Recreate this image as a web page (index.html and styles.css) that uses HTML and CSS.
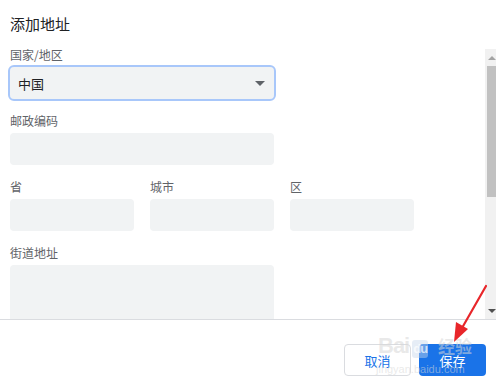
FILE: index.html
```html
<!DOCTYPE html>
<html lang="zh-CN">
<head>
    <meta charset="UTF-8">
    <meta name="viewport" content="width=device-width, initial-scale=1.0">
    <title>添加地址</title>
    <link rel="stylesheet" href="styles.css">
</head>
<body>
    <div class="dialog">
        <h1 class="title">添加地址</h1>
        <div class="body-row">
            <div class="form">
                <div class="field">
                    <div class="label">国家/地区</div>
                    <div class="select">
                        <span>中国</span>
                        <span class="caret"></span>
                    </div>
                </div>
                <div class="field">
                    <div class="label">邮政编码</div>
                    <div class="input wide"></div>
                </div>
                <div class="field-row">
                    <div class="field">
                        <div class="label">省</div>
                        <div class="input small"></div>
                    </div>
                    <div class="field">
                        <div class="label">城市</div>
                        <div class="input small"></div>
                    </div>
                    <div class="field">
                        <div class="label">区</div>
                        <div class="input small"></div>
                    </div>
                </div>
                <div class="field">
                    <div class="label">街道地址</div>
                    <div class="input wide textarea"></div>
                </div>
            </div>
            <!-- fake scrollbar -->
            <div class="scrollbar">
                <div class="sb-btn up"></div>
                <div class="sb-thumb"></div>
                <div class="sb-space"></div>
                <div class="sb-btn down"></div>
            </div>
        </div>
        <div class="footer">
            <button class="btn cancel">取消</button>
            <button class="btn save">保存</button>
        </div>

        <div class="watermark">
            <span class="wm-logo">Bai<b>du</b></span>
            <span class="wm-jy">经验</span>
            <span class="wm-url">jingyan.baidu.com</span>
        </div>

        <svg class="arrow" width="40" height="62" viewBox="0 0 40 62">
            <line x1="36" y1="2" x2="12" y2="44" stroke="#e8262a" stroke-width="2.2" stroke-linecap="round"/>
            <polygon points="4,58 6,38 18,45" fill="#e8262a"/>
        </svg>
    </div>
</body>
</html>
```

FILE: styles.css
```css
body {
    margin: 0;
    font-family: "Noto Sans CJK SC", "Noto Sans", sans-serif;
    background: #fff;
}
.dialog {
    position: relative;
    width: 496px;
    height: 388px;
    overflow: hidden;
}
.title {
    margin: 0;
    height: 47px;
    box-sizing: border-box;
    padding: 14px 0 0 10px;
    font-size: 15px;
    line-height: 20px;
    font-weight: normal;
    color: #202124;
}
.body-row {
    display: flex;
    height: 272px;
}
.form {
    flex: 1;
    overflow: hidden;
    padding-left: 10px;
}
.field {
    margin-bottom: 14px;
}
.field-row {
    display: flex;
    gap: 16px;
}
.label {
    font-size: 12px;
    line-height: 15px;
    color: #5f6368;
    margin-bottom: 5px;
}
.select {
    width: 264px;
    height: 32px;
    box-sizing: border-box;
    background: #f1f3f4;
    border-radius: 4px;
    outline: 2px solid #a8c7fa;
    display: flex;
    align-items: center;
    justify-content: space-between;
    padding: 0 9px 0 8px;
    font-size: 13px;
    color: #202124;
}
.caret {
    width: 0;
    height: 0;
    border-left: 5px solid transparent;
    border-right: 5px solid transparent;
    border-top: 5px solid #5f6368;
}
.input {
    height: 32px;
    background: #f1f3f4;
    border-radius: 4px;
}
.wide {
    width: 264px;
}
.small {
    width: 124px;
}
.textarea {
    height: 100px;
}
.scrollbar {
    width: 11px;
    margin-top: 2px;
    background: #f1f1f1;
    display: flex;
    flex-direction: column;
}
.sb-btn {
    height: 17px;
    position: relative;
}
.sb-btn::after {
    content: "";
    position: absolute;
    left: 3px;
    width: 0;
    height: 0;
    border-left: 4px solid transparent;
    border-right: 4px solid transparent;
}
.sb-btn.up::after {
    top: 7px;
    border-bottom: 4px solid #a3a3a3;
}
.sb-btn.down::after {
    top: 7px;
    border-top: 4px solid #505050;
}
.sb-thumb {
    height: 131px;
    margin-left: 2px;
    background: #c1c1c1;
}
.sb-space {
    flex: 1;
}
.footer {
    border-top: 1px solid #dadce0;
    display: flex;
    justify-content: flex-end;
    gap: 8px;
    padding: 24px 10px 0 0;
}
.btn {
    width: 67px;
    height: 32px;
    border-radius: 4px;
    font-family: inherit;
    font-size: 13px;
    cursor: pointer;
}
.cancel {
    background: #fff;
    border: 1px solid #dadce0;
    color: #1a73e8;
}
.save {
    background: #1a73e8;
    border: none;
    color: #fff;
}
.watermark {
    position: absolute;
    left: 376px;
    top: 333px;
    width: 110px;
    height: 46px;
    white-space: nowrap;
    color: rgba(215, 215, 215, 0.55);
    font-family: "Liberation Sans", sans-serif;
    pointer-events: none;
}
.wm-logo {
    position: absolute;
    left: 2px;
    top: 0;
    font-size: 22px;
    line-height: 26px;
    font-weight: bold;
    letter-spacing: -1px;
}
.wm-logo b {
    display: inline-block;
    margin-left: 3px;
    font-size: 13px;
    line-height: 18px;
    background: rgba(200, 215, 235, 0.45);
    color: rgba(255, 255, 255, 0.7);
    border-radius: 3px;
    padding: 0 1px;
}
.wm-jy {
    position: absolute;
    left: 62px;
    top: 1px;
    font-family: "Noto Sans CJK SC", sans-serif;
    font-size: 17px;
    line-height: 24px;
    font-weight: bold;
}
.wm-url {
    position: absolute;
    left: 0;
    top: 29px;
    font-size: 11px;
    line-height: 14px;
}
.arrow {
    position: absolute;
    left: 450px;
    top: 284px;
}
```
